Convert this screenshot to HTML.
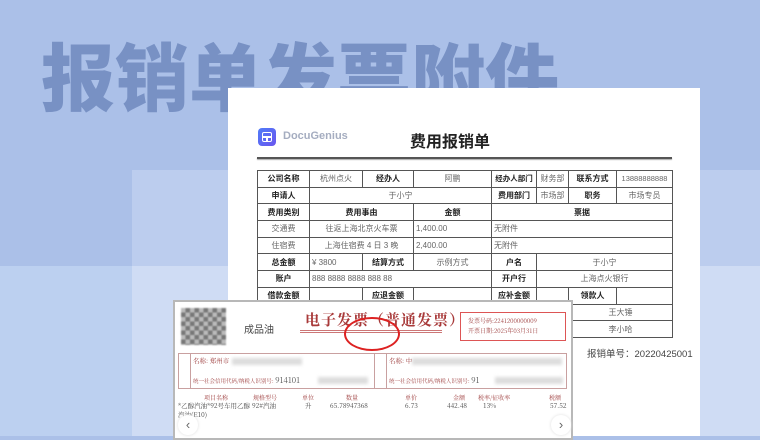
<!DOCTYPE html>
<html><head><meta charset="utf-8"><style>
*{margin:0;padding:0;box-sizing:border-box}
body{width:760px;height:436px;overflow:hidden;position:relative;background:#abc0e8;font-family:"Liberation Sans","Noto Sans CJK SC",sans-serif}
.abs{position:absolute}
.big{left:41px;top:24px;font-size:74px;font-weight:900;color:#7891c4;letter-spacing:0px;white-space:nowrap;font-family:"Noto Sans CJK SC",sans-serif;line-height:100px}
table{border-collapse:collapse;table-layout:fixed;position:absolute;left:257px;top:170px;width:415px;font-size:8px;color:#333}
td{border:1px solid #555;height:16.7px;text-align:center;padding:0 1px;white-space:nowrap;overflow:hidden;color:#666}
td.b{font-weight:bold;color:#222}
td.l{text-align:left;padding-left:2px}
.inv{font-family:"Noto Serif CJK SC","Liberation Serif",serif}
.r{color:#9c3b3b}
.blur{background:#ddd;filter:blur(1.5px);height:7px}
.it{position:absolute;font-family:"Noto Serif CJK SC","Liberation Serif",serif;font-size:6.5px;color:#444;white-space:nowrap;line-height:8px}
.ih{position:absolute;font-family:"Noto Serif CJK SC","Liberation Serif",serif;font-size:6px;color:#9c3b3b;white-space:nowrap;top:393px}
</style></head><body>
<div class="abs" style="left:132px;top:170px;width:628px;height:266px;background:#bccdee"></div>
<div class="abs" style="left:0;top:266px;width:132px;height:170px;background:#bcd0f0"></div>
<div class="abs" style="left:132px;top:266px;width:628px;height:170px;background:#cfdcf4"></div>
<div class="abs big">报销单发票附件</div>

<div class="abs" style="left:228px;top:88px;width:472px;height:348px;background:#fff"></div>
<div class="abs" style="left:258px;top:128px;width:18px;height:18px;border-radius:4px;background:linear-gradient(135deg,#4f7cf8,#6a55ee)">
<div style="position:absolute;left:4px;top:4px;width:10px;height:10px;border:1.5px solid #fff;border-radius:2px"></div>
<div style="position:absolute;left:4px;top:8px;width:10px;height:1.5px;background:#fff"></div>
<div style="position:absolute;left:8px;top:8px;width:1.5px;height:6px;background:#fff"></div>
</div>
<div class="abs" style="left:283px;top:130px;font-size:11px;font-weight:bold;color:#a5adc0">DocuGenius</div>
<div class="abs" style="left:410px;top:128px;font-size:16px;font-weight:bold;color:#222">费用报销单</div>
<div class="abs" style="left:257px;top:157px;width:415px;height:2px;background:#555;box-shadow:0 1px 1px #aaa"></div>

<table>
<colgroup><col style="width:52px"><col style="width:53px"><col style="width:51px"><col style="width:78px"><col style="width:45px"><col style="width:32px"><col style="width:48px"><col style="width:56px"></colgroup>
<tr><td class="b">公司名称</td><td>杭州点火</td><td class="b">经办人</td><td>阿鹏</td><td class="b" style="font-size:7.5px">经办人部门</td><td>财务部</td><td class="b">联系方式</td><td style="font-size:7.5px">13888888888</td></tr>
<tr><td class="b">申请人</td><td colspan="3">于小宁</td><td class="b">费用部门</td><td>市场部</td><td class="b">职务</td><td>市场专员</td></tr>
<tr><td class="b">费用类别</td><td colspan="2" class="b">费用事由</td><td class="b">金额</td><td colspan="4" class="b">票据</td></tr>
<tr><td>交通费</td><td colspan="2">往返上海北京火车票</td><td class="l">1,400.00</td><td colspan="4" class="l">无附件</td></tr>
<tr><td>住宿费</td><td colspan="2">上海住宿费 4 日 3 晚</td><td class="l">2,400.00</td><td colspan="4" class="l">无附件</td></tr>
<tr><td class="b">总金额</td><td class="l">¥ 3800</td><td class="b">结算方式</td><td>示例方式</td><td class="b">户名</td><td colspan="3">于小宁</td></tr>
<tr><td class="b">账户</td><td colspan="3" class="l">888 8888 8888 888 88</td><td class="b">开户行</td><td colspan="3">上海点火银行</td></tr>
<tr><td class="b">借款金额</td><td></td><td class="b">应退金额</td><td></td><td class="b">应补金额</td><td></td><td class="b">领款人</td><td></td></tr>
<tr><td></td><td colspan="5"></td><td colspan="2">王大锤</td></tr>
<tr><td></td><td colspan="5"></td><td colspan="2">李小哈</td></tr>
</table>
<div class="abs" style="left:587px;top:346px;font-size:9.5px;color:#444">报销单号：20220425001</div>

<div class="abs" style="left:173px;top:300px;width:400px;height:140px;background:#fff;border:2px solid #b8b8b8"></div>
<div class="abs" style="left:181px;top:308px;width:45px;height:37px;background:repeating-conic-gradient(#777 0 25%,#bbb 0 50%) 0 0/9px 9px;filter:blur(0.8px)"></div>
<div class="abs" style="left:244px;top:321px;font-size:10px;color:#444">成品油</div>
<div class="abs inv r" style="left:305px;top:309px;font-size:15px;color:#a83a3a;letter-spacing:1px;font-weight:bold">电子发票（普通发票）</div>
<div class="abs" style="left:300px;top:330px;width:142px;height:3px;border-top:1px solid #c77;border-bottom:1px solid #c77"></div>
<div class="abs" style="left:344px;top:317px;width:56px;height:34px;border:2px solid #d22;border-radius:50%"></div>
<div class="abs" style="left:460px;top:312px;width:106px;height:29px;border:1.5px solid #d55"></div>
<div class="abs inv r" style="left:468px;top:316px;font-size:6px;line-height:10px">发票号码:2241200000009<br>开票日期:2025年03月31日</div>

<div class="abs" style="left:178px;top:353px;width:389px;height:36px;border:1px solid #c9a0a0"></div>
<div class="abs" style="left:190px;top:353px;width:1px;height:36px;background:#c9a0a0"></div>
<div class="abs" style="left:374px;top:353px;width:1px;height:36px;background:#c9a0a0"></div>
<div class="abs" style="left:386px;top:353px;width:1px;height:36px;background:#c9a0a0"></div>
<div class="abs inv r" style="left:193px;top:356px;font-size:6.5px">名称: 郑州市</div>
<div class="abs blur" style="left:232px;top:358px;width:70px"></div>
<div class="abs inv r" style="left:193px;top:375px;font-size:5.5px">统一社会信用代码/纳税人识别号: <span style="font-size:8px;color:#555">914101</span></div>
<div class="abs blur" style="left:318px;top:377px;width:50px"></div>
<div class="abs inv r" style="left:389px;top:356px;font-size:6.5px">名称: 中</div>
<div class="abs blur" style="left:412px;top:358px;width:150px"></div>
<div class="abs inv r" style="left:389px;top:375px;font-size:5.5px">统一社会信用代码/纳税人识别号: <span style="font-size:8px;color:#555">91</span></div>
<div class="abs blur" style="left:495px;top:377px;width:68px"></div>

<div class="ih" style="left:204px">项目名称</div>
<div class="ih" style="left:253px">规格型号</div>
<div class="ih" style="left:302px">单位</div>
<div class="ih" style="left:346px">数量</div>
<div class="ih" style="left:405px">单价</div>
<div class="ih" style="left:453px">金额</div>
<div class="ih" style="left:478px">税率/征收率</div>
<div class="ih" style="left:549px">税额</div>
<div class="it" style="left:178px;top:402px">*乙醇汽油*92号车用乙醇</div>
<div class="it" style="left:252px;top:402px">92#汽油</div>
<div class="it" style="left:305px;top:402px">升</div>
<div class="it" style="left:330px;top:402px">65.78947368</div>
<div class="it" style="left:405px;top:402px">6.73</div>
<div class="it" style="left:447px;top:402px">442.48</div>
<div class="it" style="left:483px;top:402px">13%</div>
<div class="it" style="left:550px;top:402px">57.52</div>
<div class="it" style="left:178px;top:411px">汽油(E10)</div>
<div class="abs" style="left:178px;top:415px;width:20px;height:20px;border-radius:50%;background:#fff;box-shadow:0 0 3px #ddd;text-align:center;font-size:13px;color:#666;line-height:20px">‹</div>
<div class="abs" style="left:551px;top:415px;width:20px;height:20px;border-radius:50%;background:#fff;box-shadow:0 0 3px #ddd;text-align:center;font-size:13px;color:#666;line-height:20px">›</div>
</body></html>
